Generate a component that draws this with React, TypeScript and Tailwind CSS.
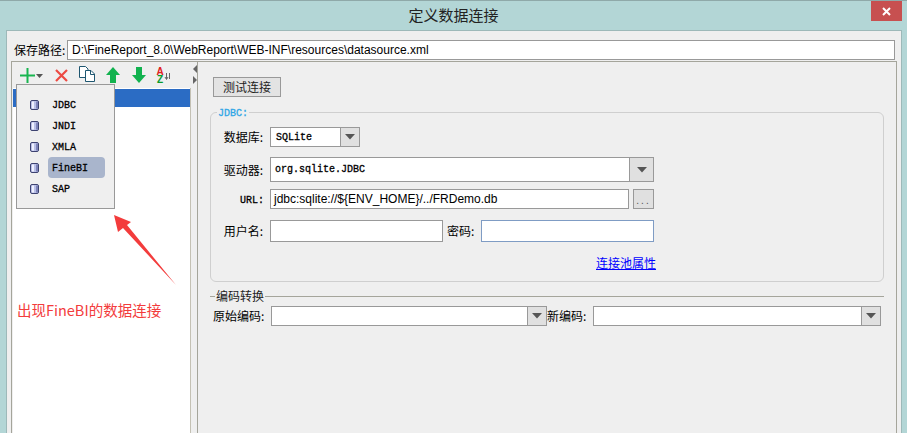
import React from "react";

const CJK = "font-['Noto_Sans_CJK_SC','Liberation_Sans',sans-serif]";
const SANS = "font-['Liberation_Sans','Noto_Sans_CJK_SC',sans-serif]";
const MONO = "font-['Liberation_Mono','Noto_Sans_CJK_SC',monospace] [-webkit-text-stroke:0.3px_currentColor]";

function Caret() {
  return (
    <svg width="10" height="6" viewBox="0 0 10 6">
      <path d="M0 0H10L5 5.500Z" fill="#555" />
    </svg>
  );
}

function Combo({ w, arrow, children }: { w: string; arrow: string; children?: React.ReactNode }) {
  return (
    <div className={`${w} flex h-full border border-[#999] bg-white`}>
      <div className="flex-1 flex items-center min-w-0">{children}</div>
      <div className={`${arrow} border-l border-[#999] bg-[#e0e0e0] flex items-center justify-center`}>
        <Caret />
      </div>
    </div>
  );
}

function Label({ children }: { children: React.ReactNode }) {
  return <div className={`w-[47px] text-right text-[12px] leading-none text-black ${CJK}`}>{children}</div>;
}

const Db = () => (
  <svg width="9" height="10" viewBox="0 0 9 10" className="shrink-0">
    <rect x="0.500" y="0.500" width="8" height="9" rx="1.500" fill="#b9bfe6" stroke="#3d4270" />
    <rect x="2" y="1.500" width="2" height="7" fill="#eef0ff" />
    <rect x="6" y="1.500" width="2" height="7" fill="#7c82b8" />
  </svg>
);

function MenuItem({ name, active }: { name: string; active?: boolean }) {
  return (
    <div className="flex items-center h-[21px] pl-[13px]">
      <Db />
      <div
        className={`ml-[9px] w-[57px] h-[21px] flex items-center pl-[4px] pt-[1px] rounded-[4px] text-[10px] text-black ${MONO} ${active ? "bg-[#a9b5cc]" : ""}`}
      >
        {name}
      </div>
    </div>
  );
}

export default function App() {
  return (
    <div className={`relative w-[907px] h-[433px] overflow-hidden bg-[#b3d6d6] border-t border-[#8fa9a9] flex flex-col ${CJK}`}>
      <div className="h-[29px] shrink-0 flex items-start">
        <div className="flex-1" />
        <div className="ml-[5px] text-[15px] leading-[28px] text-[#222]">定义数据连接</div>
        <div className="flex-1 flex justify-end pr-[5px]">
          <div className="w-[31px] h-[20px] bg-[#c75050] flex items-center justify-center">
            <svg width="9" height="9" viewBox="0 0 9 9">
              <path d="M1 1L8 8M8 1L1 8" stroke="#fff" strokeWidth="2" />
            </svg>
          </div>
        </div>
      </div>

      <div className="flex-1 min-h-0 ml-[6px] mr-[5px] border-t border-x border-[#9db9b9] bg-[#efefef] flex flex-col">
        <div className="h-[30px] shrink-0 flex items-end pl-[7px] pr-[6px] pb-[1px]">
          <div className="w-[53px] h-[20px] flex items-center text-[12px] text-black whitespace-nowrap">保存路径:</div>
          <div className={`flex-1 h-[20px] border border-[#999] bg-white flex items-center pl-[4px] text-[12px] text-black ${SANS}`}>
            D:\FineReport_8.0\WebReport\WEB-INF\resources\datasource.xml
          </div>
        </div>

        <div className="flex-1 min-h-0 ml-[4px] mr-[4px] border-t border-l border-r border-[#a5a59b] flex">
          {/* left column */}
          <div className="w-[179px] shrink-0 flex flex-col">
            <div className="h-[26px] shrink-0 flex items-center pl-[8px]">
              <svg width="15" height="15" viewBox="0 0 15 15">
                <path d="M7.500 0V15M0 7.500H15" stroke="#19b550" strokeWidth="2" />
              </svg>
              <svg width="7" height="4" viewBox="0 0 7 4" className="ml-[1px] mt-[1px]">
                <path d="M0 0H7L3.500 4Z" fill="#555" />
              </svg>
              <svg width="13" height="13" viewBox="0 0 13 13" className="ml-[12px]">
                <path d="M1 1L12 12M12 1L1 12" stroke="#ec4a43" strokeWidth="2.200" />
              </svg>
              <svg width="16" height="16" viewBox="0 0 16 16" className="ml-[11px] -mt-[2px]">
                <path d="M.5.500H6.500L9 3V11.500H.5Z" fill="#fff" stroke="#1e5670" />
                <path d="M6.500 4.500H12L15.500 8V15.500H6.500Z" fill="#fff" stroke="#1e5670" />
                <path d="M11.500 4.500V8.500H15.500" fill="none" stroke="#1e5670" />
              </svg>
              <svg width="14" height="16" viewBox="0 0 14 16" className="ml-[11px] -mt-[1px]">
                <path d="M7 0L14 8H10V16H4V8H0Z" fill="#12b24f" />
              </svg>
              <svg width="14" height="16" viewBox="0 0 14 16" className="ml-[12px] -mt-[1px]">
                <path d="M4 0H10V8H14L7 16L0 8H4Z" fill="#12b24f" />
              </svg>
              <svg width="16" height="20" viewBox="0 0 16 20" className="ml-[10px] mt-[3px]">
                <text x="0.500" y="8" fontSize="10" fontWeight="700" fontFamily="Liberation Sans" fill="#e02020">A</text>
                <text x="1" y="16" fontSize="10" fontWeight="700" fontFamily="Liberation Sans" fill="#0a9a2c">Z</text>
                <path d="M10.500 6V12M9 10L10.500 12.500L12 10M13.500 6V12" stroke="#666" fill="none" />
              </svg>
            </div>
            <div className="flex-1 min-h-0 ml-[1px] bg-white border-r border-[#c4c1b4] pt-[1px]">
              <div className="h-[18px] bg-[#2b6cc4]" />
            </div>
          </div>

          {/* divider */}
          <div className="w-[6px] shrink-0 flex flex-col items-end pt-[3px] gap-[3px]">
            <svg width="4" height="8" viewBox="0 0 4 8"><path d="M4 0V8L0 4Z" fill="#666" /></svg>
            <svg width="4" height="8" viewBox="0 0 4 8"><path d="M0 0V8L4 4Z" fill="#666" /></svg>
          </div>

          {/* right column */}
          <div className="flex-1 min-w-0 border-l border-[#a5a59b] flex flex-col pl-[12px] pr-[12px]">
            <div className="mt-[15px] ml-[3px] w-[68px] h-[20px] border border-[#999] bg-[#e3e3e3] flex items-center justify-center text-[12px] text-[#222]">
              测试连接
            </div>

            <fieldset className="mt-[9px] w-[674px] h-[176px] border border-[#cfcfcf] rounded-[6px] pl-[5px] relative">
              <legend className={`ml-[1px] px-[1px] translate-y-[2px] text-[10px] leading-[12px] text-[#2ea6e6] ${MONO}`}>JDBC:</legend>

              <div className="mt-[9px] h-[20px] flex items-center">
                <Label>数据库:</Label>
                <div className="ml-[7px] h-full">
                  <Combo w="w-[90px]" arrow="w-[19px]">
                    <span className={`pl-[5px] text-[10px] text-black ${MONO}`}>SQLite</span>
                  </Combo>
                </div>
              </div>

              <div className="mt-[10px] h-[25px] flex items-center">
                <Label>驱动器:</Label>
                <div className="ml-[7px] h-full">
                  <Combo w="w-[384px]" arrow="w-[24px]">
                    <span className={`pl-[4px] text-[10px] text-black ${MONO}`}>org.sqlite.JDBC</span>
                  </Combo>
                </div>
              </div>

              <div className="mt-[7px] h-[20px] flex items-center">
                <div className={`w-[48px] pt-[2px] text-right text-[10px] text-black ${MONO}`}>URL:</div>
                <div className={`ml-[6px] w-[359px] h-full border border-[#999] bg-white flex items-center pl-[3px] text-[12px] text-black ${SANS}`}>
                  {"jdbc:sqlite://${ENV_HOME}/../FRDemo.db"}
                </div>
                <div className={`ml-[4px] w-[21px] h-full border border-[#999] bg-[#e0e0e0] flex items-end justify-center pb-[2px] text-[10px] leading-none tracking-[2px] text-[#555] ${SANS}`}>
                  ...
                </div>
              </div>

              <div className="mt-[11px] h-[22px] flex items-center">
                <Label>用户名:</Label>
                <div className="ml-[7px] w-[173px] h-full border border-[#999] bg-white" />
                <div className="ml-[4px] w-[34px] text-[12px] leading-none text-black">密码:</div>
                <div className="w-[173px] h-full border border-[#7f9cc4] bg-white" />
              </div>

              <div className="mt-[13px] ml-[380px] text-[12px] leading-[16px] text-[#0000ff] underline whitespace-nowrap">连接池属性</div>
            </fieldset>

            <fieldset className="mt-[6px] w-[674px] border-t border-[#a5a59b] pl-[1px]">
              <legend className="ml-[4px] px-[1px] text-[12px] leading-[16px] text-[#222]">编码转换</legend>
              <div className="mt-[2px] h-[20px] flex items-center">
                <div className="w-[55px] pl-[2px] text-[12px] leading-none text-black whitespace-nowrap">原始编码:</div>
                <div className="ml-[5px] h-full">
                  <Combo w="w-[276px]" arrow="w-[19px]" />
                </div>
                <div className="w-[46px] text-[12px] leading-none text-black whitespace-nowrap">新编码:</div>
                <div className="h-full">
                  <Combo w="w-[288px]" arrow="w-[19px]" />
                </div>
              </div>
            </fieldset>
          </div>
        </div>
      </div>

      {/* dropdown menu over the list */}
      <div className="absolute left-[16px] top-[83px] w-[99px] h-[125px] border border-[#999] bg-[#efefef] pt-[9px]">
        <MenuItem name="JDBC" />
        <MenuItem name="JNDI" />
        <MenuItem name="XMLA" />
        <MenuItem name="FineBI" active />
        <MenuItem name="SAP" />
      </div>

      {/* annotation */}
      <svg className="absolute left-[110px] top-[210px]" width="70" height="80" viewBox="110 211 70 80">
        <path d="M114 215L131 222L127 225L176 285L123 228L118 232Z" fill="#f33c3c" />
      </svg>
      <div className="absolute left-[17px] top-[299px] text-[14.500px] leading-[20px] text-[#f33c3c] whitespace-nowrap">
        出现FineBI的数据连接
      </div>
    </div>
  );
}
